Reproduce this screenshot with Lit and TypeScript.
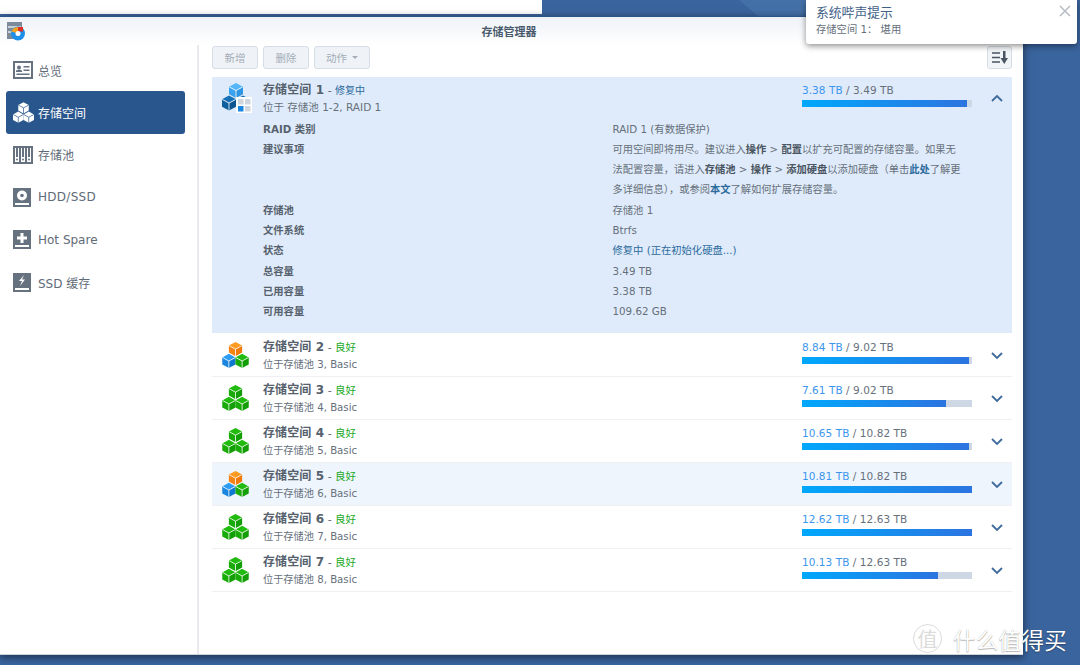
import { LitElement, html, css, svg } from "lit";
import { customElement } from "lit/decorators.js";

const cube = (x: number, y: number, top: string, left: string, right: string, line = "#fff") => svg`
  <g transform="translate(${x} ${y})">
    <path d="M7 0 L14 3.800 L7 7.600 L0 3.800 Z" fill=${top}/>
    <path d="M0 3.800 L7 7.600 V15 L0 11.200 Z" fill=${left}/>
    <path d="M14 3.800 L7 7.600 V15 L14 11.200 Z" fill=${right}/>
    <path d="M7 7.600 V15 M0.400 4 L7 7.600 L13.600 4" stroke=${line} stroke-width=".8" fill="none"/>
  </g>`;

const stack = (t: string[], l: string[], r: string[]) => html`
  <svg class="vol" width="27" height="26" viewBox="0 0 28 27.500">
    ${cube(7, 0, t[0], t[1], t[2])}${cube(0, 12.500, l[0], l[1], l[2])}${cube(14, 12.500, r[0], r[1], r[2])}
  </svg>`;

const G = ["#20bb0e", "#19ab08", "#129e04"];
const O = ["#ff9a22", "#f58412", "#ef7a08"];
const B = ["#2b9cf2", "#1a86e0", "#1078d0"];

const greenIcon = () => stack(G, G, G);
const mixIcon = () => stack(O, B, G);
const repairIcon = () => html`
  <svg class="vol" width="30" height="30" viewBox="0 0 30 30">
    ${cube(7, 0, "#55b7f7", "#3aa2ec", "#2e95e2")}
    ${cube(0, 12.500, "#1570b5", "#0e5f9e", "#0b5690")}
    ${cube(14, 12.500, "#1570b5", "#0e5f9e", "#0b5690")}
    <rect x="14" y="14" width="16" height="16" fill="#fff"/>
    <rect x="16" y="16" width="5.500" height="5.500" fill="#cfd6dd"/>
    <rect x="23" y="16" width="5.500" height="5.500" fill="#cfd6dd"/>
    <rect x="16" y="23" width="5.500" height="5.500" fill="#1a86e0"/>
    <rect x="23" y="23" width="5.500" height="5.500" fill="#cfd6dd"/>
  </svg>`;

const navIcons = {
  overview: html`<svg width="20" height="18" viewBox="0 0 20 18"><rect width="20" height="18" fill="#66727f"/><rect x="2" y="2" width="16" height="14" fill="#fff"/><circle cx="6" cy="6.500" r="2" fill="#66727f"/><path d="M3 11h6v-1.500l-3-1-3 1z" fill="#66727f"/><path d="M10.500 5h6v1.400h-6zM10.500 8.500h6v1.400h-6zM3.500 12.500h13v1.400h-13z" fill="#66727f"/></svg>`,
  space: html`<svg width="21" height="21" viewBox="0 0 28 27.500">${cube(7, 0, "#fff", "#fff", "#fff", "#2a5589")}${cube(0, 12.500, "#fff", "#fff", "#fff", "#2a5589")}${cube(14, 12.500, "#fff", "#fff", "#fff", "#2a5589")}</svg>`,
  pool: html`<svg width="20" height="18" viewBox="0 0 20 18"><rect width="20" height="18" fill="#66727f"/><path d="M2 2h4v14H2zM8 2h4v14H8zM14 2h4v14h-4z" fill="#fff"/><path d="M3 2h2v9H3zM9 2h2v9H9zM15 2h2v9h-2z" fill="#66727f"/><circle cx="4" cy="13.500" r="1" fill="#66727f"/><circle cx="10" cy="13.500" r="1" fill="#66727f"/><circle cx="16" cy="13.500" r="1" fill="#66727f"/></svg>`,
  hdd: html`<svg width="18" height="19" viewBox="0 0 18 19"><rect width="18" height="19" fill="#66727f"/><circle cx="9" cy="7.500" r="5" fill="#fff"/><circle cx="9" cy="7.500" r="1.800" fill="#66727f"/><rect x="2" y="15" width="14" height="2" fill="#fff"/></svg>`,
  spare: html`<svg width="18" height="19" viewBox="0 0 18 19"><rect width="18" height="19" fill="#66727f"/><path d="M7.500 3h3v3.500H14v3h-3.500V13h-3V9.500H4v-3h3.500z" fill="#fff"/><rect x="2" y="15" width="14" height="2" fill="#fff"/></svg>`,
  cache: html`<svg width="18" height="19" viewBox="0 0 18 19"><rect width="18" height="19" fill="#66727f"/><path d="M11 2L6 8h3l-2 5 5-6.500H9z" fill="#fff"/><rect x="2" y="15" width="14" height="2" fill="#fff"/></svg>`,
};

const chevron = (up: boolean) => html`
  <svg class="chev" width="12" height="8" viewBox="0 0 12 8">
    <path d=${up ? "M1 7 L6 2 L11 7" : "M1 1 L6 6 L11 1"} fill="none" stroke="#3f6a9c" stroke-width="1.800"/>
  </svg>`;

const rows = [
  { n: 2, pool: "3", used: "8.84 TB", total: "9.02 TB", pct: 98, mix: true },
  { n: 3, pool: "4", used: "7.61 TB", total: "9.02 TB", pct: 84.500, mix: false },
  { n: 4, pool: "5", used: "10.65 TB", total: "10.82 TB", pct: 98.400, mix: false },
  { n: 5, pool: "6", used: "10.81 TB", total: "10.82 TB", pct: 100, mix: true, hover: true },
  { n: 6, pool: "7", used: "12.62 TB", total: "12.63 TB", pct: 100, mix: false },
  { n: 7, pool: "8", used: "10.13 TB", total: "12.63 TB", pct: 80.200, mix: false },
];

@customElement("app-root")
export class AppRoot extends LitElement {
  static styles = css`
    :host {
      display: block; position: relative; width: 1080px; height: 665px; overflow: hidden;
      background: #3a649d;
      font-family: "DejaVu Sans", "Noto Sans CJK SC", sans-serif;
      font-size: 11px; color: #5a6673;
    }
    .streak { position: absolute; left: 745px; top: -20px; width: 70px; height: 50px; background: #4470a8; transform: skewX(50deg); }
    .backwin { position: absolute; left: 0; top: 0; width: 542px; height: 14px; background: #fff; }
    .win {
      position: absolute; left: 0; top: 16px; width: 1023px; height: 639px; display: flex; flex-direction: column;
      background: #fff; border-top: 1.500px solid #2b5488; box-sizing: border-box;
      box-shadow: 0 2px 8px rgba(0,0,0,.55); border-bottom: 1px solid #cfd3d8;
    }
    .title {
      height: 27.500px; flex: none; display: flex; align-items: center; justify-content: center; position: relative;
      background: linear-gradient(#eef2f7, #fff);
      font-size: 11px; font-weight: 700; color: #4a5a6c; padding-right: 5px; box-sizing: border-box;
    }
    .logo { position: absolute; left: 6px; top: 5px; }
    .body { flex: 1; display: flex; min-height: 0; }
    .side { width: 199px; flex: none; box-sizing: border-box; border-right: 2px solid #e8eaed; padding: 4.500px 12px 0 6px; display: flex; flex-direction: column; }
    .nav { height: 42.400px; display: flex; align-items: center; font-size: 12px; color: #5f6b78; border-radius: 3px; padding-left: 7px; flex: none; }
    .nav .ico { width: 25px; display: flex; align-items: center; justify-content: flex-start; }
    .nav.on { background: #29568c; color: #fff; }
    .nav.wide { letter-spacing: .28px; }
    .main { flex: 1; padding: 1px 11px 0 13px; min-width: 0; }
    .tools { display: flex; gap: 5px; height: 23px; margin-bottom: 8px; }
    .btn {
      box-sizing: border-box; height: 23px; border: 1px solid #d5dde6; border-radius: 3px; background: #eff3f7;
      color: #a3adb8; font-size: 10.500px; display: flex; align-items: center; justify-content: center; width: 46px;
    }
    .btn.act { width: 56px; gap: 5px; }
    .caret { width: 0; height: 0; border: 3px solid transparent; border-top: 3px solid #a3adb8; border-bottom: 0; }
    .sp { flex: 1; }
    .btn.sort { width: 25px; background: #f2f5f8; }
    .open { background: #dfebfa; height: 256px; box-sizing: border-box; padding: 0 0 0 10px; margin-bottom: 1px; }
    .head { display: flex; height: 42px; box-sizing: border-box; align-items: stretch; }
    .iconcell { width: 41px; flex: none; display: flex; align-items: center; }
    .names { width: 539px; flex: none; padding-top: 5px; box-sizing: border-box; }
    .nm { font-size: 11px; line-height: 16px; height: 16px; white-space: nowrap; }
    .nm b { font-size: 12px; color: #56616d; letter-spacing: .1px; }
    .ok { color: #22a91f; font-size: 10.500px; }
    .fix { color: #2b6a9d; font-size: 10px; }
    .loc { font-size: 10.200px; line-height: 16px; margin-top: 2px; white-space: nowrap; color: #66707b; }
    .open .loc { font-size: 10.500px; margin-top: 1px; }
    .use { width: 170px; flex: none; padding-top: 5px; box-sizing: border-box; }
    .nums { font-size: 10.500px; line-height: 16px; white-space: nowrap; color: #66707b; letter-spacing: .05px; }
    .nums span { color: #3d96ee; }
    .track { height: 7px; background: #cdd8e4; margin-top: 2px; }
    .fill { height: 100%; background: linear-gradient(90deg, #00a8fc, #2c74e0); }
    .chevcell { flex: 1; display: flex; align-items: center; justify-content: flex-end; padding-right: 9px; padding-top: 1px; box-sizing: border-box; }
    .row .chevcell { padding-top: 3px; }
    .detail { padding: 0 0 0 41px; }
    .d { display: grid; grid-template-columns: 349.500px 348px; font-size: 10.300px; line-height: 20.300px; color: #66707b; }
    .d > b { color: #56616d; font-weight: 700; }
    .d a { color: #2b6a9d; text-decoration: none; font-weight: 700; }
    .d strong { color: #4a5561; }
    .advice { font-size: 10.250px; white-space: nowrap; }
    .fixv { color: #2b6a9d; }
    .row { height: 43px; display: flex; padding-left: 10px; box-sizing: border-box; border-bottom: 1.500px solid #eef0f3; }
    .row .head { flex: 1; height: auto; }
    .row.hov { background: #eef5fd; }
    .notice {
      position: absolute; left: 806px; top: 0; width: 271px; height: 44px; background: #fff; border-radius: 0 0 3px 3px;
      box-shadow: 0 2px 6px rgba(0,0,0,.45); box-sizing: border-box; padding: 5px 10px;
    }
    .notice .t { font-size: 12.800px; line-height: 16px; color: #3f6189; }
    .notice .s { font-size: 10.300px; line-height: 15px; margin-top: 1px; color: #66707b; white-space: nowrap; }
    .close { position: absolute; right: 6px; top: 5px; }
    .mark { position: absolute; left: 913px; top: 624px; display: flex; align-items: center; gap: 11px; color: #fff; pointer-events: none; }
    .seal { width: 29px; height: 29px; border: 1px solid rgba(150,150,150,.35); border-radius: 50%; box-sizing: border-box; display: flex; align-items: center; justify-content: center; font-size: 20px; color: #dcdcdc; font-family: "Noto Sans CJK SC", sans-serif; }
    .wm { font-family: "Noto Sans CJK SC", sans-serif; font-size: 22.500px; line-height: 28px; letter-spacing: .3px; text-shadow: 0 1px 1px rgba(0,0,0,.28), 0 0 1px rgba(0,0,0,.25); white-space: nowrap; }
  `;

  private head(icon: unknown, n: number, state: unknown, loc: string, used: string, total: string, pct: number) {
    return html`
      <div class="head">
        <div class="iconcell">${icon}</div>
        <div class="names">
          <div class="nm"><b>存储空间 ${n}</b> - ${state}</div>
          <div class="loc">${loc}</div>
        </div>
        <div class="use">
          <div class="nums"><span>${used}</span> / ${total}</div>
          <div class="track"><div class="fill" style="width:${pct}%"></div></div>
        </div>
        <div class="chevcell">${chevron(false)}</div>
      </div>`;
  }

  render() {
    const detail: [string, unknown][] = [
      ["RAID 类别", "RAID 1 (有数据保护)"],
      ["建议事项", html`<div class="advice">可用空间即将用尽。建议进入<strong>操作</strong> &gt; <strong>配置</strong>以扩充可配置的存储容量。如果无<br>法配置容量，请进入<strong>存储池</strong> &gt; <strong>操作</strong> &gt; <strong>添加硬盘</strong>以添加硬盘（单击<a>此处</a>了解更<br>多详细信息），或参阅<a>本文</a>了解如何扩展存储容量。</div>`],
      ["存储池", "存储池 1"],
      ["文件系统", "Btrfs"],
      ["状态", html`<span class="fixv">修复中 (正在初始化硬盘...)</span>`],
      ["总容量", "3.49 TB"],
      ["已用容量", "3.38 TB"],
      ["可用容量", "109.62 GB"],
    ];
    const nav = [
      ["总览", navIcons.overview], ["存储空间", navIcons.space], ["存储池", navIcons.pool],
      ["HDD/SSD", navIcons.hdd], ["Hot Spare", navIcons.spare], ["SSD 缓存", navIcons.cache],
    ] as const;
    return html`
      <div class="streak"></div>
      <div class="backwin"></div>
      <div class="win">
        <div class="title">
          <svg class="logo" width="20" height="19" viewBox="0 0 20 19">
            <rect x="1" y="0" width="15" height="17" fill="#7c8a99"/>
            <path d="M2 5h13M2 10h13" stroke="#dfe6ee" stroke-width="1.500"/>
            <circle cx="12" cy="11.500" r="7" fill="#1f8fe8"/>
            <path d="M12 11.500V5a7 7 0 0 0-6.500 4.500z" fill="#f4a11e"/>
            <rect x="12" y="5" width="5" height="4.500" fill="#e0302a"/>
            <circle cx="12" cy="11.500" r="2.500" fill="#fff"/>
          </svg>
          存储管理器
        </div>
        <div class="body">
          <div class="side">
            ${nav.map(([t, i], k) => html`<div class="nav ${k === 1 ? "on" : ""} ${k === 3 ? "wide" : ""}"><span class="ico">${i}</span>${t}</div>`)}
          </div>
          <div class="main">
            <div class="tools">
              <div class="btn">新增</div>
              <div class="btn">删除</div>
              <div class="btn act">动作<span class="caret"></span></div>
              <div class="sp"></div>
              <div class="btn sort">
                <svg width="17" height="13" viewBox="0 0 17 13"><path d="M1 2h8M1 6.500h8M1 11h8" stroke="#4a5561" stroke-width="1.600"/><path d="M12 0h2.500v7H17l-3.750 6L9.500 7H12z" fill="#4a5561"/></svg>
              </div>
            </div>
            <div class="open">
              <div class="head">
                <div class="iconcell">${repairIcon()}</div>
                <div class="names">
                  <div class="nm"><b>存储空间 1</b> - <span class="fix">修复中</span></div>
                  <div class="loc">位于 存储池 1-2, RAID 1</div>
                </div>
                <div class="use">
                  <div class="nums"><span>3.38 TB</span> / 3.49 TB</div>
                  <div class="track"><div class="fill" style="width:97%"></div></div>
                </div>
                <div class="chevcell">${chevron(true)}</div>
              </div>
              <div class="detail">
                ${detail.map(([k, v]) => html`<div class="d"><b>${k}</b><div>${v}</div></div>`)}
              </div>
            </div>
            ${rows.map((r) => html`
              <div class="row ${r.hover ? "hov" : ""}">
                ${this.head(r.mix ? mixIcon() : greenIcon(), r.n, html`<span class="ok">良好</span>`, `位于存储池 ${r.pool}, Basic`, r.used, r.total, r.pct)}
              </div>`)}
          </div>
        </div>
      </div>
      <div class="notice">
        <div class="t">系统哔声提示</div>
        <div class="s">存储空间 1： 堪用</div>
        <svg class="close" width="12" height="12" viewBox="0 0 12 12"><path d="M1 1l10 10M11 1L1 11" stroke="#b5bcc4" stroke-width="1.500"/></svg>
      </div>
      <div class="mark">
        <div class="seal">值</div>
        <div class="wm">什么值得买</div>
      </div>
    `;
  }
}
